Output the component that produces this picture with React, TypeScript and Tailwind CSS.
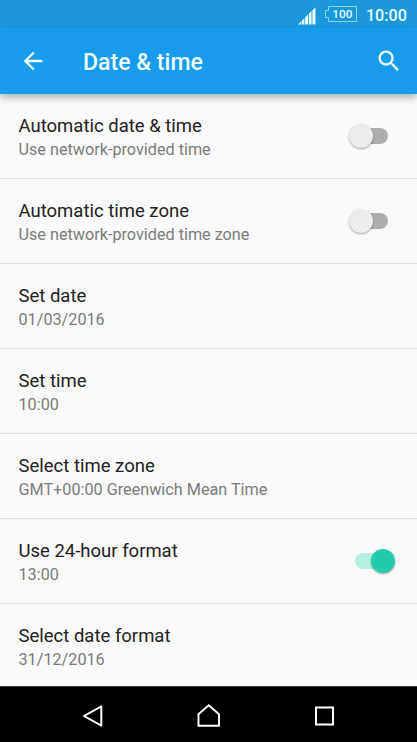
import React, { useState } from 'react';

interface Setting {
  title: string;
  summary: string;
  enabled?: boolean;
}

const initialSettings: Setting[] = [
  { title: 'Automatic date & time', summary: 'Use network-provided time', enabled: false },
  { title: 'Automatic time zone', summary: 'Use network-provided time zone', enabled: false },
  { title: 'Set date', summary: '01/03/2016' },
  { title: 'Set time', summary: '10:00' },
  { title: 'Select time zone', summary: 'GMT+00:00 Greenwich Mean Time' },
  { title: 'Use 24-hour format', summary: '13:00', enabled: true },
  { title: 'Select date format', summary: '31/12/2016' },
];

const StatusBar: React.FC = () => (
  <div className="flex h-7 shrink-0 items-center justify-end bg-[#1c97dc] pr-[10px] text-[#e4fbff]">
    <svg className="mr-[9px] mt-[3px] h-[18px] w-[18px]" viewBox="0 0 18 18" fill="currentColor">
      <path d="M0 17.5L3 14.5V17.5ZM3.6 14L6.4 11.2V17.5H3.6ZM7.2 10.4L10 7.6V17.5H7.2ZM10.8 6.8L13.6 4V17.5H10.8ZM14.4 3.2L17.5 .2V17.5H14.4Z" />
    </svg>
    <div className="relative mr-[9px] h-4 w-8">
      <svg className="h-4 w-8" viewBox="0 0 32 16" fill="none" stroke="#8fd5f5">
        <path d="M3.5 .5H31.5V15.5H3.5V11.5H.5V4.5H3.5Z" />
      </svg>
      <span className="absolute inset-0 pl-[3px] text-center text-[11.8px] font-medium leading-[17px]">
        100
      </span>
    </div>
    <span className="pt-[3px] text-[16.2px] font-medium leading-5">10:00</span>
  </div>
);

const AppBar: React.FC = () => (
  <header className="relative z-10 flex h-[66px] shrink-0 items-center bg-[#179bea] pl-[19px] pr-[14px] text-[#eefcff] shadow-[0_4px_7px_rgba(0,0,0,0.28)]">
    <button type="button" aria-label="Back">
      <svg className="h-7 w-7" viewBox="0 0 24 24" fill="currentColor">
        <path d="M20 11H7.83l5.59-5.59L12 4l-8 8 8 8 1.41-1.41L7.83 13H20v-2z" />
      </svg>
    </button>
    <h1 className="ml-9 flex-1 pt-1 text-[23.1px] font-medium leading-7">Date &amp; time</h1>
    <button type="button" aria-label="Search">
      <svg className="h-7 w-7" viewBox="0 0 24 24" fill="currentColor">
        <path d="M15.5 14h-.79l-.28-.27C15.41 12.59 16 11.11 16 9.5 16 5.91 13.09 3 9.5 3S3 5.91 3 9.5 5.91 16 9.5 16c1.61 0 3.09-.59 4.23-1.57l.27.28v.79l5 4.99L20.49 19l-4.99-5zm-6 0C7.01 14 5 11.99 5 9.5S7.01 5 9.5 5 14 7.01 14 9.5 11.99 14 9.5 14z" />
      </svg>
    </button>
  </header>
);

interface ToggleProps {
  label: string;
  checked: boolean;
  onChange: () => void;
}

const Toggle: React.FC<ToggleProps> = ({ label, checked, onChange }) => (
  <button
    type="button"
    role="switch"
    aria-label={label}
    aria-checked={checked}
    onClick={onChange}
    className={`flex h-4 items-center rounded-full ${
      checked ? 'w-[33px] justify-end bg-[#b5efe0]' : 'w-8 justify-start bg-[#aeaeae]'
    }`}
  >
    <span
      className={`h-6 w-6 shrink-0 rounded-full shadow-[0_1px_2px_rgba(0,0,0,0.35)] ${
        checked ? '-mr-[7px] bg-[#22cbab]' : '-ml-[7px] bg-[#ececec]'
      }`}
    />
  </button>
);

const NavigationBar: React.FC = () => (
  <nav className="flex h-14 shrink-0 items-center justify-center gap-[92px] border-t border-[#3c3c3c] bg-black pt-[3px] text-white">
    <button type="button" aria-label="Back">
      <svg className="h-6 w-6" viewBox="0 0 24 24" fill="none" stroke="currentColor" strokeWidth="2" strokeLinejoin="round">
        <path d="M3 12L20.3 2.3V21.7Z" />
      </svg>
    </button>
    <button type="button" aria-label="Home">
      <svg className="h-6 w-6" viewBox="0 0 24 24" fill="none" stroke="currentColor" strokeWidth="1.9">
        <path d="M1.5 10.3L11.7 1.3L22 10.3V21.8H1.5Z" />
      </svg>
    </button>
    <button type="button" aria-label="Recent apps">
      <svg className="h-6 w-6" viewBox="0 0 24 24" fill="none" stroke="currentColor" strokeWidth="2">
        <path d="M3 3.5H20V20.5H3Z" />
      </svg>
    </button>
  </nav>
);

const App: React.FC = () => {
  const [settings, setSettings] = useState<Setting[]>(initialSettings);

  const handleToggle = (index: number) => {
    setSettings(settings.map((item, i) => (i === index ? { ...item, enabled: !item.enabled } : item)));
  };

  return (
    <div className="flex h-[742px] w-[417px] flex-col overflow-hidden bg-[#fafafa] font-['Roboto',sans-serif]">
      <StatusBar />
      <AppBar />
      <main className="min-h-0 flex-1 overflow-hidden">
        {settings.map((item, index) => (
          <div
            key={item.title}
            className="flex h-[85px] items-center justify-between border-b border-[#dedede] pl-[18.5px] pr-[29px]"
          >
            <div className="pt-0.5">
              <div className="text-[18.5px] leading-6 text-[#212121]">{item.title}</div>
              <div className="text-[16.22px] leading-[23px] text-[#7b7b7b]">{item.summary}</div>
            </div>
            {item.enabled !== undefined && (
              <Toggle label={item.title} checked={item.enabled} onChange={() => handleToggle(index)} />
            )}
          </div>
        ))}
      </main>
      <NavigationBar />
    </div>
  );
};

export default App;
